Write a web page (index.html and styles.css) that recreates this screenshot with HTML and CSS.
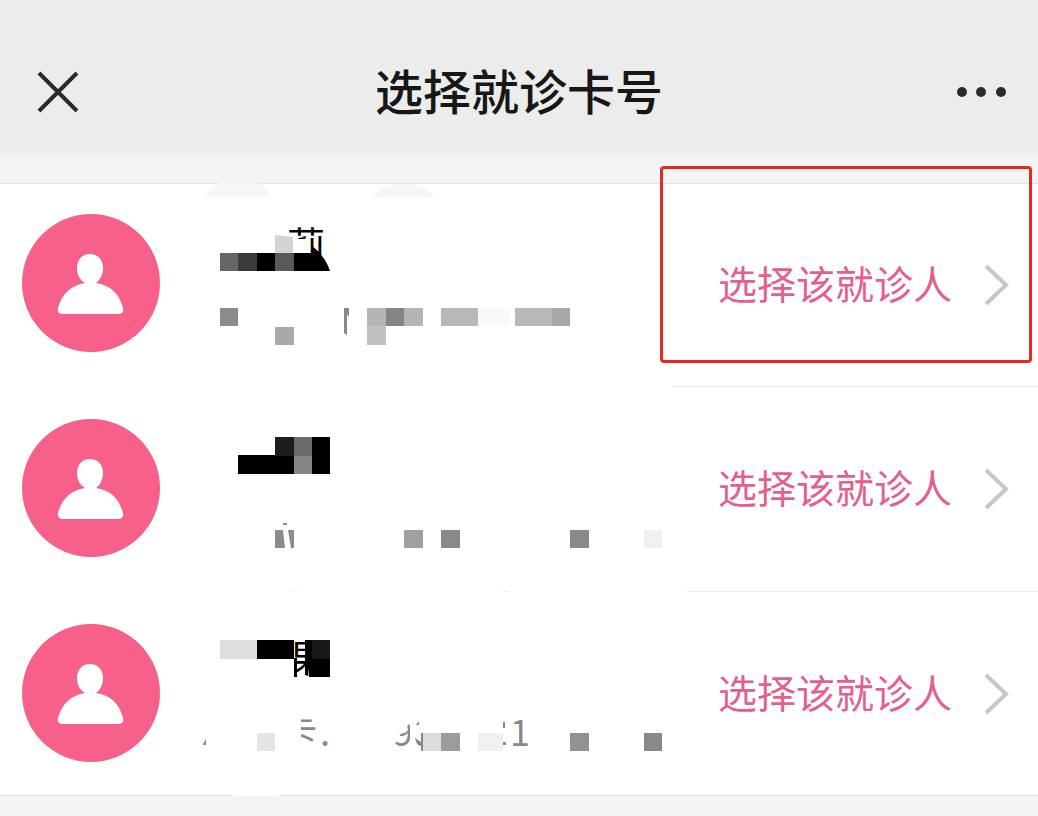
FILE: index.html
```html
<!DOCTYPE html>
<html lang="zh-CN">
<head>
<meta charset="utf-8">
<meta name="viewport" content="width=device-width, initial-scale=1">
<title>选择就诊卡号</title>
<link rel="stylesheet" href="styles.css">
</head>
<body>
<svg class="defs" aria-hidden="true">
  <symbol id="person" viewBox="0 0 138 138">
    <path d="M68 40c8 0 13 6 13 14 0 7-3 12-7 15 14 2 23 10 27 25 1 3-1 6-4 6H40c-3 0-5-3-4-6 4-15 14-23 27-25-5-3-8-8-8-15 0-8 5-14 13-14Z" fill="#fff"/>
  </symbol>
  <symbol id="chevron" viewBox="0 0 28 42">
    <path d="M3 2 23 21 3 40" fill="none" stroke="#c7c7c7" stroke-width="4"/>
  </symbol>
</svg>

<header class="navbar">
  <button class="icon-button" type="button" aria-label="关闭">
    <svg width="42" height="42" viewBox="0 0 42 42"><path d="M2 2 40 40M40 2 2 40" stroke="#2b2b2b" stroke-width="4"/></svg>
  </button>
  <h1 class="title">选择就诊卡号</h1>
  <button class="icon-button icon-button-end" type="button" aria-label="更多">
    <svg width="50" height="12" viewBox="0 0 50 12" fill="#2b2b2b"><circle cx="5" cy="6" r="5"/><circle cx="24" cy="6" r="5"/><circle cx="44" cy="6" r="5"/></svg>
  </button>
</header>

<main>
<ul class="patients">
  <li class="patient">
    <span class="avatar"><svg width="138" height="138"><use href="#person"/></svg></span>
    <svg class="details" width="472" height="203" viewBox="200 184 472 203">
      <clipPath id="c1"><path d="M286 224h42v13h-42zM310 237h18v20h-18z"/></clipPath>
      <path d="M205 197c3-8 11-13 18-15h32c8 3 13 7 15 15Z" fill="#f6f6f6"/>
      <path d="M372 197c8-9 19-13 32-13s24 4 30 13Z" fill="#f6f6f6"/>
      <path d="M275 235l18 2v16h-18z" fill="#d4d4d4"/>
      <text class="name" x="287" y="259" clip-path="url(#c1)">莉</text>
      <path d="M298 238l8-1-1 2h-6z"/>
      <path d="M220 253h18v18h-18z" fill="#666"/><path d="M238 253h19v18h-19z" fill="#3b3b3b"/>
      <path d="M257 253h18v18h-18zM294 253h18v-7c8 6 15 15 18 25h-36z"/><path d="M275 253h19v18h-19z" fill="#595959"/>
      <path d="M220 308h18v18h-18z" fill="#8b8b8b"/><path d="M275 327h19v18h-19z" fill="#a9a9a9"/>
      <path d="M344 308h5v9l-2-3v21l-3-2z" fill="#888"/>
      <path d="M367 308h19v18h-19zM404 308h19v18h-19z" fill="#b5b5b5"/><path d="M386 308h18v18h-18z" fill="#858585"/><path d="M367 326h19v19h-19z" fill="#c1c1c1"/>
      <path d="M441 308h37v18h-37zM515 308h37v18h-37z" fill="#b8b8b8"/><path d="M478 308h32v18h-32z" fill="#f9f9f9"/><path d="M552 308h18v18h-18z" fill="#a8a8a8"/>
    </svg>
    <button class="choose" type="button"><span class="choose-label">选择该就诊人</span><svg width="28" height="42"><use href="#chevron"/></svg></button>
    <span class="highlight"></span>
  </li>
  <li class="patient">
    <span class="avatar"><svg width="138" height="138"><use href="#person"/></svg></span>
    <svg class="details" width="487" height="205" viewBox="200 387 487 205">
      <path d="M238 455h37v19h-37zM275 455h19v19h-19zM312 437h18v37h-18z"/><path d="M275 437h19v19h-19z" fill="#1d1d1d"/>
      <path d="M294 437h18v19h-18z" fill="#6b6b6b"/><path d="M294 456h18v18h-18z" fill="#858585"/>
      <path d="M275 530h8l2 18h-10zM288 530h6v18h-3zM283 523h4v2h-4z" fill="#8b8b8b"/>
      <path d="M404 530h19v18h-19z" fill="#a0a0a0"/><path d="M441 530h19v18h-19zM570 530h19v18h-19z" fill="#898989"/><path d="M644 530h18v18h-18z" fill="#f0f0f0"/>
      <path d="M291 590h7v1h-7zM503 591h6v1h-6z" fill="#eee"/>
    </svg>
    <button class="choose choose-faint" type="button"><span class="choose-label">选择该就诊人</span><svg width="28" height="42"><use href="#chevron"/></svg></button>
  </li>
  <li class="patient">
    <span class="avatar"><svg width="138" height="138"><use href="#person"/></svg></span>
    <svg class="details" width="472" height="203" viewBox="200 592 472 203">
      <clipPath id="c2"><path d="M294 638h14v39h-14z"/></clipPath>
      <clipPath id="c3"><path d="M301 715h18v32h-18z"/></clipPath>
      <clipPath id="c4"><path d="M395 746v-5l15-18v23z"/></clipPath>
      <path d="M220 640h37v19h-37z" fill="#dedede"/><path d="M257 640h37v19h-37zM305 640h25v37h-21z"/><path d="M312 640h18v19h-18z" fill="#171717"/>
      <path d="M294 641h10v36h-10z" fill="#fff"/>
      <text class="name" x="289" y="672" clip-path="url(#c2)">果</text>
      <path d="M294 658h3v19h-3zM305 640h3v35h-3z"/>
      <path d="M203 744l3-5v6h-3z" fill="#888"/>
      <path d="M257 733h18v18h-18z" fill="#e4e4e4"/>
      <text class="number" x="281" y="745" clip-path="url(#c3)">卡</text>
      <text class="number" x="320" y="746">.</text>
      <text class="number" x="393" y="746" clip-path="url(#c4)">9</text>
      <path d="M416 725l3-4v4zM415 738l6 4v-9h2v18h-2v-5c-3 0-5-3-6-8zM503 722h2v6h-2zM503 742h3v3h-3z" fill="#888"/>
      <path d="M423 733h18v18h-18z" fill="#dcdcdc"/><path d="M441 733h19v18h-19z" fill="#9c9c9c"/><path d="M478 733h25v18h-25z" fill="#f0f0f0"/>
      <text class="number" x="510" y="746">1</text>
      <path d="M570 733h19v18h-19z" fill="#929292"/><path d="M644 733h18v18h-18z" fill="#898989"/>
      <path d="M232 794h48c-5 5-13 8-24 8s-19-3-24-8Z" fill="#fff"/>
    </svg>
    <button class="choose choose-last" type="button"><span class="choose-label">选择该就诊人</span><svg width="28" height="42"><use href="#chevron"/></svg></button>
  </li>
</ul>
</main>
</body>
</html>
```
FILE: styles.css
```css
* { box-sizing: border-box; }
body {
  margin: 0;
  background: #f4f4f4;
  font-family: "Noto Sans CJK SC", "Noto Sans", sans-serif;
}
button { border: 0; background: none; font: inherit; cursor: pointer; }
.defs { display: block; width: 0; height: 0; }

.navbar {
  display: grid;
  grid-template-columns: 1fr auto 1fr;
  align-items: center;
  padding: 52px 37px 21px;
  background: #ececec;
}
.title {
  margin: 0;
  padding-bottom: 6px;
  font-size: 48px;
  font-weight: 500;
  line-height: 74px;
  color: #171717;
}
.icon-button { display: flex; justify-self: start; padding: 0; }
.icon-button-end { justify-self: end; margin-right: -6px; }

.patients {
  margin: 30px 0 0;
  padding: 0;
  list-style: none;
  background: #fff;
  border: solid #e2e2e2;
  border-width: 1px 0;
}
.patient { display: flex; position: relative; }
.avatar {
  flex: none;
  width: 138px;
  height: 138px;
  margin: 32px 40px 35px 22px;
  border-radius: 50%;
  background: #f7608a;
}
.patient:first-child .avatar { margin-top: 30px; }
.patient:last-child .avatar { margin-bottom: 33px; }
.avatar svg { display: block; }
.details { flex: none; overflow: visible; }
.name { font-size: 38px; fill: #000; }
.number { font-size: 36px; fill: #888; }

.choose {
  display: flex;
  flex: 1;
  align-items: center;
  justify-content: flex-end;
  gap: 31px;
  padding: 0 27px 0 0;
  border-bottom: 1px solid #e2e2e2;
  font-size: 39px;
  line-height: 56px;
  color: #e4608c;
  white-space: nowrap;
}
.choose-label { padding-bottom: 6px; }
.choose-faint { border-bottom-color: #f0f0f0; }
.choose-last { border-bottom: 0; }

.highlight {
  position: absolute;
  top: -18px;
  right: 6px;
  width: 372px;
  height: 197px;
  border: 3px solid #e62a20;
  border-radius: 4px;
  pointer-events: none;
}
```
